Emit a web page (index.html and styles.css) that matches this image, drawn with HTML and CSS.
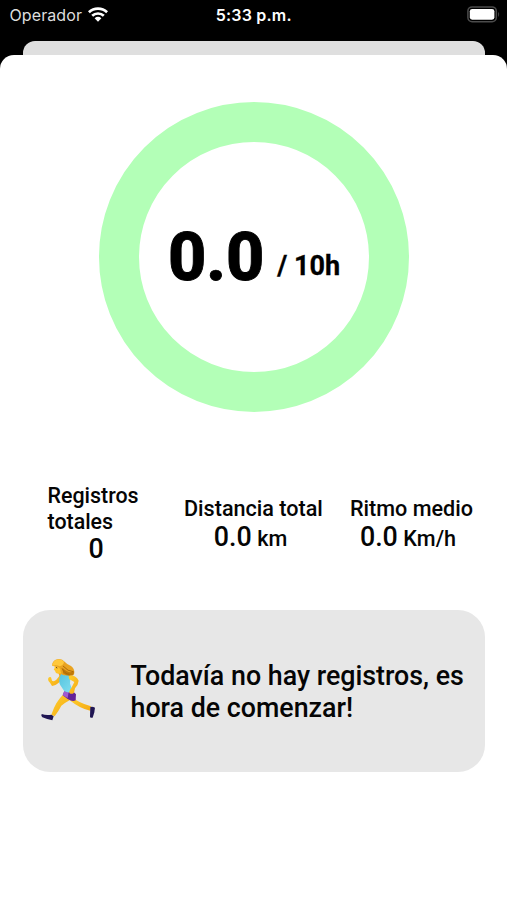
FILE: index.html
```html
<!DOCTYPE html>
<html lang="es">
<head>
<meta charset="utf-8">
<title>Registros</title>
<link rel="stylesheet" href="styles.css">
</head>
<body>
<header class="status">
  <div class="carrier"><span>Operador</span>
    <svg class="wifi" viewBox="0 0 20 15"><g fill="none" stroke="#fff" stroke-width="2.7"><path d="M.9 5.3C6 .4 14 .4 19.100 5.300"/><path d="M4.200 8.800C7.400 5.700 12.600 5.700 15.800 8.800"/></g><path fill="#fff" d="M6.600 11.200Q10 8.500 13.400 11.200L10 14.700Z"/></svg>
  </div>
  <div class="time">5:33 p.m.</div>
  <div class="power">
    <svg class="battery" viewBox="0 0 34 17"><rect x=".9" y=".9" width="28.400" height="14.800" rx="4.200" fill="none" stroke="#4b4b4b" stroke-width="1.500"/><rect x="2.800" y="2.900" width="24.600" height="10.800" rx="2.400" fill="#fff"/><path d="M31.200 5.700q1.900 2.600 0 5.200z" fill="#4b4b4b"/></svg>
  </div>
</header>
<div class="back-sheet"></div>
<main class="sheet">
  <section class="ring"><strong>0.0</strong><span>/ 10h</span></section>
  <section class="stats">
    <div class="stat total"><span class="label">Registros totales</span><span class="value">0</span></div>
    <div class="stat distance"><span class="label">Distancia total</span><span class="value">0.0 <small>km</small></span></div>
    <div class="stat pace"><span class="label">Ritmo medio</span><span class="value">0.0 <small>Km/h</small></span></div>
  </section>
  <section class="notice">
    <svg class="runner" viewBox="30 24 174 190">
      <defs>
        <linearGradient id="skin" x2="1" y2="1"><stop stop-color="#ffd02e"/><stop offset="1" stop-color="#f5a914"/></linearGradient>
        <linearGradient id="top" x2="1" y2="1"><stop stop-color="#55c3df"/><stop offset="1" stop-color="#82dff0"/></linearGradient>
      </defs>
      <path d="M126 141Q145 158 183 169L181 182Q151 176 121 152Z" fill="url(#skin)"/>
      <path d="M181 171Q188 169 195 173L193 187L188 203Q182 205 180 200Z" fill="#201653"/>
      <path d="M103 130L125 147Q105 158 94 167Q87 181 74 199L64 194Q71 174 79 160Q87 146 103 130Z" fill="url(#skin)"/>
      <path d="M35 192Q49 197 64 194L71 199L67 211Q51 208 37 202Q32 198 35 192Z" fill="#201653"/>
      <path d="M103 123L131 126L138 133L137 151Q128 157 113 147L98 136Z" fill="#652397"/>
      <path d="M103 123L116 126L113 144L98 136Z" fill="#a15ad0"/>
      <path d="M91 74L79 89Q72 96 66 92L63 82Q56 79 54 87Q54 94 60 98L66 108Q77 108 91 94Z" fill="url(#skin)"/>
      <path d="M84 66L105 69L108 82L91 85Z" fill="#f3a51b"/>
      <path d="M93 72Q105 79 113 73L120 78Q122 87 120 101L129 124Q117 131 103 124L91 106Q83 91 93 72Z" fill="url(#top)"/>
      <path d="M116 75Q139 75 146 92Q145 104 135 115L132 128Q126 134 119 130Q116 127 120 119L124 114L133 96L117 87Z" fill="url(#skin)"/>
      <path d="M73 40L92 39L101 56L94 70Q84 73 78 69L74 61L71 60L74 53Z" fill="#ffc52c"/>
      <path d="M67 48Q65 35 77 29Q94 23 104 35Q111 43 123 48Q136 57 132 73Q128 80 119 73Q111 79 100 74Q91 71 91 58Q86 48 67 48Z" fill="#e9a321"/>
      <path d="M67 48Q67 34 79 29Q94 24 102 35Q102 44 89 49Q78 43 67 48Z" fill="#ffc83b"/>
      <path d="M98 54Q115 72 132 64Q132 77 124 76Q112 80 99 70Z" fill="#bf7a0b"/>
      <path d="M99 48Q114 65 130 65M96 55Q103 72 119 73" fill="none" stroke="#ad6907" stroke-width="3"/>
      <path d="M79 51L81 55" stroke="#68411c" stroke-width="3"/>
    </svg>
    <p>Todavía no hay registros, es hora de comenzar!</p>
  </section>
</main>
</body>
</html>
```

FILE: styles.css
```css
* { box-sizing: border-box; }
body { margin: 0; height: 900px; overflow: hidden; background: #000; color: #050505; font-family: Roboto, sans-serif; display: flex; flex-direction: column; }
.status { height: 41px; flex: none; display: grid; grid-template-columns: 1fr auto 1fr; padding: 6px 7px 0 9.5px; color: #fff; font: 16px/19px Inter, sans-serif; }
.carrier { display: flex; gap: 6px; color: #ddd; letter-spacing: .1px; }
.wifi { width: 20px; height: 15px; margin-top: 1px; }
.time { font-weight: 600; letter-spacing: .2px; margin-left: -1px; margin-right: 1px; }
.power { display: flex; justify-content: flex-end; }
.battery { width: 34px; height: 17px; margin-right: -1px; }
.back-sheet { height: 14px; flex: none; margin: 0 22px 0 23px; background: #dfdfdf; border-radius: 12px 12px 0 0; }
.sheet { flex: 1; background: #fff; border-radius: 14px 14px 0 0; padding: 46.5px 22px 0 23px; }
.ring { width: 310.5px; height: 310.5px; margin: 0 auto; border: 40.5px solid #b3ffb7; border-radius: 50%; display: flex; align-items: flex-start; justify-content: center; padding-top: 76px; color: #000; }
.ring strong { font-size: 66.5px; line-height: 79px; font-weight: 800; -webkit-text-stroke: .9px #000; }
.ring span { font-size: 27px; line-height: 32px; font-weight: 700; -webkit-text-stroke: .3px #000; margin: 32px 0 0 13px; }
.stats { height: 82px; margin: 71px 0 45px; display: flex; align-items: center; padding-left: 24.5px; font-weight: 500; }
.stat { display: flex; flex-direction: column; flex: none; }
.label { font-size: 21.6px; line-height: 25.3px; }
.value { font-size: 26.8px; line-height: 32px; text-align: center; }
.value small { font-size: 21.6px; margin-left: -1.2px; }
.total { width: 97px; }
.total .label { font-size: 21.4px; }
.total .value { line-height: 31px; }
.distance { width: 140px; margin-left: 39.5px; }
.pace { width: 123px; margin-left: 26px; }
.distance, .pace { padding-top: 3px; }
.distance .label, .pace .label { white-space: nowrap; }
.distance .value, .pace .value { padding-right: 7px; white-space: nowrap; }
.notice { height: 162px; border-radius: 27px; background: #e7e7e7; display: flex; align-items: center; padding: 0 14px 0 17px; }
.runner { width: 58px; height: 63.3px; flex: none; margin-top: -3px; }
.notice p { margin: 3px 0 0 32.5px; flex: 1; font-size: 26.8px; line-height: 31.6px; font-weight: 500; }
```
